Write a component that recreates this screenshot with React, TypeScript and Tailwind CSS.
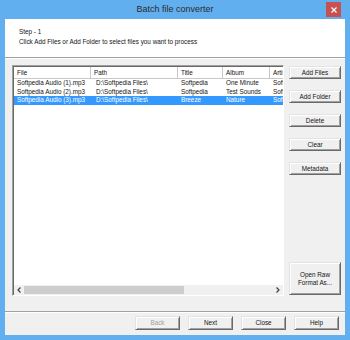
import type { ReactNode } from 'react'

const columns = ['File', 'Path', 'Title', 'Album', 'Artist']

const rows = [
    ['Softpedia Audio (1).mp3', 'D:\\Softpedia Files\\', 'Softpedia', 'One Minute', 'Softpedia'],
    ['Softpedia Audio (2).mp3', 'D:\\Softpedia Files\\', 'Softpedia', 'Test Sounds', 'Softpedia'],
    ['Softpedia Audio (3).mp3', 'D:\\Softpedia Files\\', 'Breeze', 'Nature', 'Softpedia'],
]

function Btn({ children, className = '', disabled = false }: { children: ReactNode; className?: string; disabled?: boolean }) {
    return (
        <div
            className={`flex items-center justify-center text-center leading-[8px] bg-[#f0f0f0] border border-t-[#e3e3e3] border-l-[#e3e3e3] border-r-[#696969] border-b-[#696969] shadow-[inset_1px_1px_0_#ffffff,inset_-1px_-1px_0_#a0a0a0] ${disabled ? 'text-[#a0a0a0]' : 'text-[#151515]'} ${className}`}
        >
            {children}
        </div>
    )
}

function Chevron({ dir }: { dir: 'left' | 'right' }) {
    return (
        <svg width="5" height="6" viewBox="0 0 5 6">
            <path
                d={dir === 'left' ? 'M3.5 0.5 L1 3 L3.5 5.5' : 'M1.5 0.5 L4 3 L1.5 5.5'}
                fill="none"
                stroke="#404040"
                strokeWidth="1.2"
            />
        </svg>
    )
}

export default function App() {
    return (
        <div className="w-[350px] h-[340px] bg-[#62aff0] flex flex-col font-['Liberation_Sans',Arial,sans-serif] text-[6.35px] text-[#151515]">
            {/* title bar */}
            <div className="h-[19px] shrink-0 grid grid-cols-[1fr_auto_1fr] items-center">
                <div />
                <div className="text-[9px] text-[#2b2b2b] leading-[19px]">Batch file converter</div>
                <div className="justify-self-end self-start mt-[2px] mr-[9px] w-[15px] h-[15px] bg-[#c75050] flex items-center justify-center">
                    <svg width="6" height="6" viewBox="0 0 6 6">
                        <path d="M0.5 0.5 L5.5 5.5 M5.5 0.5 L0.5 5.5" stroke="#ffffff" strokeWidth="1.2" />
                    </svg>
                </div>
            </div>

            {/* client */}
            <div className="mx-[5px] mb-[5px] flex-1 bg-[#f0f0f0] flex flex-col">
                <div className="h-[38px] shrink-0 bg-white pl-[14px] pt-[8px] leading-[10px]">
                    <div>Step - 1</div>
                    <div>Click Add Files or Add Folder to select files you want to process</div>
                </div>
                <div className="h-[2px] shrink-0 border-t border-t-[#a0a0a0] border-b border-b-white" />

                <div className="flex-1 flex pt-[6px] pl-[7px] pr-[4px] pb-[15px] gap-[5px]">
                    {/* list */}
                    <div className="w-[272px] flex flex-col bg-white border border-t-[#a0a0a0] border-l-[#a0a0a0] border-r-white border-b-white shadow-[inset_1px_1px_0_#696969] overflow-hidden">
                        <div className="flex-1 overflow-hidden pl-[1px] pt-[1px]">
                            <div className="grid grid-cols-[77px_87px_45px_47px_60px] w-[316px] h-[12px] border-b border-b-[#c8c8c8] bg-white">
                                {columns.map(c => (
                                    <div key={c} className="px-[3px] leading-[11px] border-r border-r-[#c8c8c8] overflow-hidden whitespace-nowrap">
                                        {c}
                                    </div>
                                ))}
                            </div>
                            {rows.map((r, i) => (
                                <div
                                    key={i}
                                    className={`grid grid-cols-[77px_87px_45px_47px_60px] w-[316px] h-[8.5px] leading-[8.5px] ${i === 2 ? 'bg-[#3399ff] text-white' : ''}`}
                                >
                                    {r.map((cell, j) => (
                                        <div key={j} className={`overflow-hidden whitespace-nowrap ${j === 1 ? 'pl-[5px]' : 'pl-[3px]'}`}>
                                            {cell}
                                        </div>
                                    ))}
                                </div>
                            ))}
                        </div>
                        {/* horizontal scrollbar */}
                        <div className="h-[10px] shrink-0 flex items-stretch bg-[#f0f0f0] ml-[1px]">
                            <div className="w-[10px] flex items-center justify-center">
                                <Chevron dir="left" />
                            </div>
                            <div className="w-[160px] my-[1px] bg-[#cdcdcd]" />
                            <div className="flex-1" />
                            <div className="w-[12px] flex items-center justify-center">
                                <Chevron dir="right" />
                            </div>
                        </div>
                    </div>

                    {/* side buttons */}
                    <div className="w-[52px] flex flex-col pt-[1px] gap-[11px]">
                        <Btn className="h-[13px]">Add Files</Btn>
                        <Btn className="h-[13px]">Add Folder</Btn>
                        <Btn className="h-[13px]">Delete</Btn>
                        <Btn className="h-[13px]">Clear</Btn>
                        <Btn className="h-[13px]">Metadata</Btn>
                        <Btn className="h-[33px] mt-auto mb-[1px] leading-[8px]">
                            Open Raw
                            <br />
                            Format As...
                        </Btn>
                    </div>
                </div>

                <div className="h-[2px] shrink-0 border-t border-t-[#a0a0a0] border-b border-b-white" />
                <div className="h-[22px] shrink-0 flex justify-end items-start pt-[3px] pr-[6px] gap-[8px]">
                    <Btn className="w-[45px] h-[14px]" disabled>Back</Btn>
                    <Btn className="w-[45px] h-[14px]">Next</Btn>
                    <Btn className="w-[45px] h-[14px]">Close</Btn>
                    <Btn className="w-[45px] h-[14px]">Help</Btn>
                </div>
            </div>
        </div>
    )
}
